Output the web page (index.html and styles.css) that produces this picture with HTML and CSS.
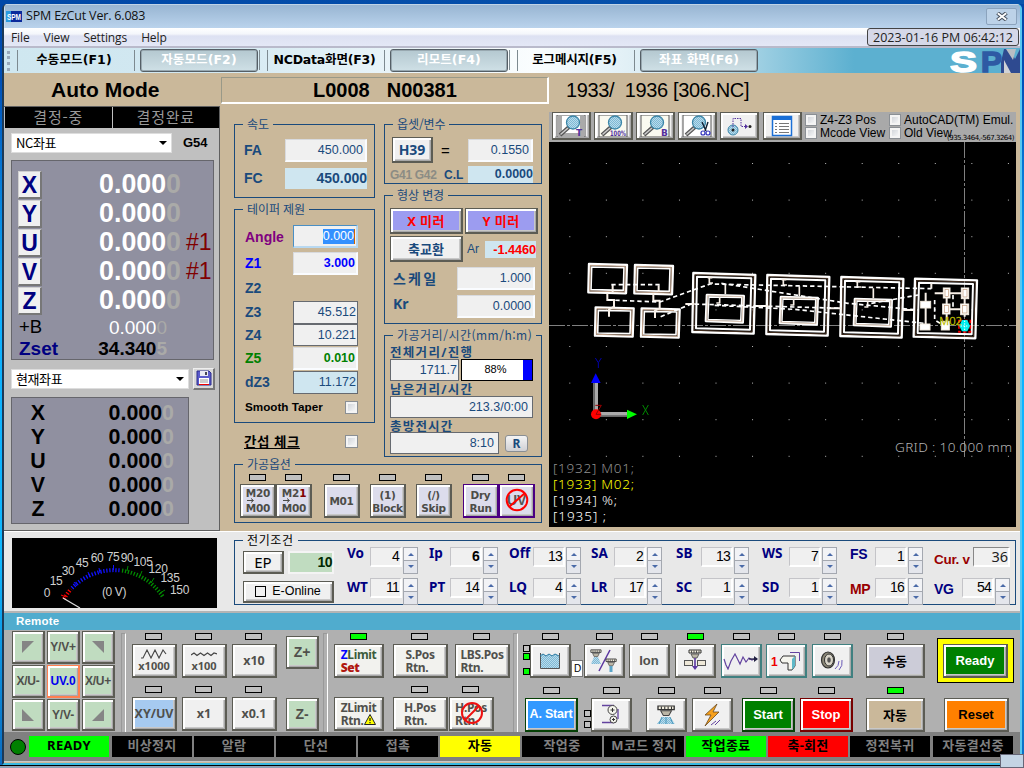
FILE: index.html
```html
<!DOCTYPE html>
<html lang="ko">
<head>
<meta charset="utf-8">
<title>SPM EzCut Ver. 6.083</title>
<link rel="stylesheet" href="styles.css">
</head>
<body>
<svg width="0" height="0" class="defs">
  <defs>
    <pattern id="chk" width="2" height="2" patternUnits="userSpaceOnUse"><rect width="2" height="2" fill="#b8dcec"/><rect width="1" height="1" fill="#7fb8d4"/><rect x="1" y="1" width="1" height="1" fill="#7fb8d4"/></pattern>
    <g id="lens"><path d="M4 21 L13 13" stroke="#555" stroke-width="4"/><path d="M4.500 20.500 L12 14" stroke="#ccc" stroke-width="1.600"/><circle cx="17" cy="8.500" r="6.500" fill="url(#chk)" stroke="#3c86a8" stroke-width="1.300"/></g>
    <g id="nozzle"><path d="M0 0H12V3H0Z" fill="#f4f0e0" stroke="#333"/><path d="M2.500 .5V3M5 .5V3M7.500 .5V3M10 .5V3" stroke="#333" stroke-width=".8"/><path d="M2 4H10L8 8H4Z" fill="#bbb6a6" stroke="#444" stroke-width=".8"/></g>
  </defs>
</svg>
<div class="window">
  <header class="titlebar">
    <svg class="appicon" width="16" height="11" viewBox="0 0 16 11"><rect width="16" height="11" fill="#0a2a9c"/><rect width="5" height="11" fill="#2a9be0"/><text x="1" y="9" textLength="14" lengthAdjust="spacingAndGlyphs" font-size="8.500" font-weight="bold" fill="#fff">SPM</text></svg>
    <span class="title">SPM EzCut Ver. 6.083</span>
    <span class="close"><svg width="12" height="9" viewBox="0 0 12 9"><path d="M1.500 1L10.500 8M10.500 1L1.500 8" stroke="#4b5563" stroke-width="4"/><path d="M1.800 1.200L10.200 7.800M10.200 1.200L1.800 7.800" stroke="#fff" stroke-width="1.800"/></svg></span>
  </header>
  <nav class="menubar"><span>File</span><span>View</span><span>Settings</span><span>Help</span><time>2023-01-16 PM 06:42:12</time></nav>
  <div class="tabs">
    <i class="grip"></i>
    <span class="tab flat first">수동모드(F1)</span><span class="tab down">자동모드(F2)</span><span class="tab flat">NCData화면(F3)</span><span class="tab down">리모트(F4)</span><span class="tab flat">로그메시지(F5)</span><span class="tab down last">좌표 화면(F6)</span>
    <svg class="logo" width="70" height="25" viewBox="0 0 70 25"><text x="0" y="23.500" textLength="27" lengthAdjust="spacingAndGlyphs" fill="#fff" stroke="#fff" stroke-width="1.500">S</text><text x="31" y="23.500" textLength="21" lengthAdjust="spacingAndGlyphs" fill="#2e5aa4" stroke="#2e5aa4" stroke-width="1.500">P</text><path d="M54 1H60L65 11L70 1V25H51V14Z" fill="#2e4a90"/><path d="M56 1H66L63 12Z" fill="#b9bec4"/><path d="M54 12L61 25H54Z" fill="#cfd2d6"/></svg>
  </div>

  <div class="mainhead">
    <h1>Auto Mode</h1>
    <div class="prog"><span>L0008</span><span>N00381</span></div>
    <div class="lines">1933/&nbsp; 1936 [306.NC]</div>
  </div>

  <main class="work">
    <aside class="left">
      <div class="states"><span>결정-중</span><span>결정완료</span></div>
      <div class="pick"><span class="combo short">NC좌표</span><b>G54</b></div>
      <div class="axes big">
        <div class="ax"><kbd>X</kbd><span class="num">0.000<i>0</i></span></div>
        <div class="ax"><kbd>Y</kbd><span class="num">0.000<i>0</i></span></div>
        <div class="ax"><kbd>U</kbd><span class="num">0.000<i>0</i></span><em>#1</em></div>
        <div class="ax"><kbd>V</kbd><span class="num">0.000<i>0</i></span><em>#1</em></div>
        <div class="ax"><kbd>Z</kbd><span class="num">0.000<i>0</i></span></div>
        <div class="aux"><span>+B</span><span class="num">0.000<i>0</i></span></div>
        <div class="aux zset"><span>Zset</span><span class="num">34.340<i>5</i></span></div>
      </div>
      <div class="pick second"><span class="combo long">현재좌표</span>
        <span class="save"><svg width="16" height="16" viewBox="0 0 16 16"><path d="M1 1H13L15 3V15H1Z" fill="#5a5acb" stroke="#2c2c8c"/><rect x="4" y="1" width="8" height="5" fill="#e8e8f4"/><rect x="9" y="2" width="2" height="3" fill="#445"/><rect x="3" y="8" width="10" height="7" fill="#fff"/><path d="M4 10H12M4 12H12" stroke="#999"/><path d="M3 14.500H13" stroke="#e00"/></svg></span></div>
      <div class="axes small">
        <div><b>X</b><span class="num">0.000<i>0</i></span></div>
        <div><b>Y</b><span class="num">0.000<i>0</i></span></div>
        <div><b>U</b><span class="num">0.000<i>0</i></span></div>
        <div><b>V</b><span class="num">0.000<i>0</i></span></div>
        <div><b>Z</b><span class="num">0.000<i>0</i></span></div>
      </div>
    </aside>

    <section class="middle">
      <div class="cols">
        <div class="stack">
          <fieldset class="speed"><legend>속도</legend>
            <div class="row"><label>FA</label><span class="in">450.000</span></div>
            <div class="row fc"><label>FC</label><span class="in ro">450.000</span></div>
          </fieldset>
          <fieldset class="taper"><legend>테이퍼 제원</legend>
            <div class="row r27 purple"><label>Angle</label><span class="in focus"><mark>0.000</mark></span></div>
            <div class="row r26 blue"><label>Z1</label><span class="in">3.000</span></div>
            <div class="row r24"><label>Z2</label></div>
            <div class="row r24"><label>Z3</label><span class="in box">45.512</span></div>
            <div class="row r22"><label>Z4</label><span class="in box">10.221</span></div>
            <div class="row r24 green"><label>Z5</label><span class="in">0.010</span></div>
            <div class="row r24"><label>dZ3</label><span class="in box cyan">11.172</span></div>
            <div class="row r26 smooth"><label>Smooth Taper</label><i class="cb"></i></div>
          </fieldset>
          <div class="interf"><u>간섭 체크</u><i class="cb"></i></div>
        </div>
        <div class="stack">
          <fieldset class="offset"><legend>옵셋/변수</legend>
            <div class="line"><span class="btn h39">H39</span><span class="eq">=</span><span class="in">0.1550</span></div>
            <div class="line two"><span class="dim">G41 G42</span><span class="cl">C.L</span><span class="in ro">0.0000</span></div>
          </fieldset>
          <fieldset class="shape"><legend>형상 변경</legend>
            <div class="line"><span class="btn mirror">X 미러</span><span class="btn mirror">Y 미러</span></div>
            <div class="line swap"><span class="btn">축교환</span><span class="ar">Ar</span><span class="arv">-1.4460</span></div>
            <div class="line wide"><label>스케일</label><span class="in">1.000</span></div>
            <div class="line wide kr"><label>Kr</label><span class="in">0.0000</span></div>
          </fieldset>
          <fieldset class="dist"><legend>가공거리/시간(mm/h:m)</legend>
            <h4>전체거리/진행</h4>
            <div class="line"><span class="in box total">1711.7</span><span class="progress">88%</span></div>
            <h4>남은거리/시간</h4>
            <div class="line"><span class="in box remain">213.3/0:00</span></div>
            <h4>총방전시간</h4>
            <div class="line"><span class="in box spark">8:10</span><span class="rbtn">R</span></div>
          </fieldset>
        </div>
      </div>
      <fieldset class="options"><legend>가공옵션</legend>
        <div class="keys">
          <div class="key"><i class="led"></i><span class="btn tall">M20<svg class="arrow" width="8" height="5" viewBox="0 0 8 5"><path d="M0 2.500H6M4 .5L6.500 2.500L4 4.500" fill="none" stroke="#4c4c48"/></svg>M00</span></div>
          <div class="key"><i class="led"></i><span class="btn tall"><span>M2<q>1</q></span><svg class="arrow" width="8" height="5" viewBox="0 0 8 5"><path d="M0 2.500H6M4 .5L6.500 2.500L4 4.500" fill="none" stroke="#4c4c48"/></svg>M00</span></div>
          <div class="key k3"><i class="led"></i><span class="btn">M01</span></div>
          <div class="key k4"><i class="led"></i><span class="btn">(1)<br>Block</span></div>
          <div class="key k4"><i class="led"></i><span class="btn">(/)<br>Skip</span></div>
          <div class="key k6"><i class="led"></i><span class="btn violet">Dry<br>Run</span></div>
          <div class="key"><i class="led"></i><span class="btn violet"><svg width="28" height="28" viewBox="0 0 28 28"><text x="4" y="18.500" font-size="14" font-weight="bold" fill="#555">UV</text><circle cx="14" cy="14" r="10.300" fill="none" stroke="#f00" stroke-width="2"/><path d="M6 21L22 7" stroke="#f00" stroke-width="2"/></svg></span></div>
        </div>
      </fieldset>
    </section>

    <section class="viewer">
      <div class="vtools">
        <span class="btn"><svg width="30" height="22" viewBox="0 0 30 22"><rect x="1" y="0" width="28" height="22" fill="#fff" stroke="#555"/><path d="M2 1H6V18H24V1H29V21H2Z" fill="#aaa"/><use href="#lens" x="0" y="-1"/><text x="20" y="21" class="tg">T</text></svg></span>
        <span class="btn"><svg width="30" height="22" viewBox="0 0 30 22"><rect x="1" y="0" width="28" height="22" fill="#fafaf0" stroke="#555"/><use href="#lens" y="-1"/><text x="12" y="21" class="tg pct" textLength="16" lengthAdjust="spacingAndGlyphs">100%</text></svg></span>
        <span class="btn"><svg width="30" height="22" viewBox="0 0 30 22"><rect x="1" y="0" width="28" height="22" fill="#fafaf0" stroke="#555"/><use href="#lens" y="-1"/><text x="21" y="21" class="tg">B</text></svg></span>
        <span class="btn"><svg width="30" height="22" viewBox="0 0 30 22"><rect x="1" y="0" width="28" height="22" fill="#fff" stroke="#555"/><use href="#lens" y="-1"/><path d="M20 7L24 16M26 7L23 16" stroke="#123" stroke-width="1.400"/><circle cx="21" cy="18" r="2" fill="none" stroke="#33b" stroke-width="1.200"/><circle cx="26" cy="18" r="2" fill="none" stroke="#33b" stroke-width="1.200"/></svg></span>
        <span class="btn"><svg width="30" height="22" viewBox="0 0 30 22"><circle cx="9" cy="15" r="5" fill="url(#chk)" stroke="#3c86a8"/><circle cx="9" cy="15" r="1.500" fill="#222"/><path d="M9 12V3.500H17V11.500H23" fill="none" stroke="#53309c" stroke-dasharray="1.500 1"/><path d="M21 9L24 11.500L21 14Z" fill="#53309c"/><circle cx="26" cy="11.500" r="1.500" fill="#222"/></svg></span>
        <span class="btn wide"><svg width="30" height="22" viewBox="0 0 30 22"><rect x="5.500" y="1.500" width="19" height="19" fill="#fff" stroke="#1a6fd6" stroke-width="1.500"/><path d="M5 3H25" stroke="#1a6fd6" stroke-width="4"/><path d="M8 8.500H10M8 11.500H10M8 14.500H10M8 17.500H10M12 8.500H22M12 11.500H22M12 14.500H22M12 17.500H22" stroke="#777"/></svg></span>
        <div class="flags"><span><i class="cb"></i>Z4-Z3 Pos</span><span><i class="cb"></i>AutoCAD(TM) Emul.</span><span><i class="cb"></i>Mcode View</span><span><i class="cb"></i>Old View</span><small>(935.3464,-567.3264)</small></div>
      </div>
      <svg class="cad" width="467" height="385" viewBox="549 142 467 385">
        <defs>
          <pattern id="dots" x="569.300" y="163" width="36.550" height="36.600" patternUnits="userSpaceOnUse"><rect width="1" height="1" fill="#bbb"/></pattern>
          <g id="part" stroke-linejoin="round"><path d="M5 2L191 8L186 184L2 179Z" stroke="#fff" stroke-width="7"/><path d="M16 13L179 18L175 172L13 168Z" stroke="#fff" stroke-width="6"/><path d="M10 7L186 12L181 179L7 174Z" stroke="#6a4a34" stroke-width="2"/><path d="M46 68L156 71L153 150L43 146Z" stroke="#fff" stroke-width="8"/><path d="M52 74L150 76L147 144L49 141Z" stroke="#fff" stroke-width="4"/><path d="M48 70L154 73L151 148L45 144Z" stroke="#b08a6c" stroke-width="1.500"/><path d="M53 14V32H64M101 36V66M84 74V92H74M48 16H62" stroke="#f8f0e8" stroke-width="5"/></g>
          <g id="tile" stroke-linejoin="round"><path d="M3 2L117 5L114 90L1 87Z" stroke="#fff" stroke-width="7"/><path d="M11 11L108 13L106 81L9 79Z" stroke="#fff" stroke-width="5"/><path d="M7 6L112 9L110 86L5 83Z" stroke="#c8a890" stroke-width="3"/></g>
        </defs>
        <rect x="549" y="142" width="467" height="385" fill="#000"/>
        <rect x="549" y="142" width="467" height="320" fill="url(#dots)"/>
        <path d="M964.500 142V459M549 325.500H1016" stroke="#808080" stroke-dasharray="16 2 3 2" fill="none"/>
        <g transform="translate(548 240) scale(.33333)" fill="none">
          <use href="#tile" x="120" y="70"/><use href="#tile" x="258" y="73"/><use href="#tile" x="140" y="200"/><use href="#tile" x="278" y="203"/>
          <use href="#part" x="431" y="97"/><use href="#part" x="653" y="103"/><use href="#part" x="875" y="109"/>
          <g stroke-linejoin="round"><path d="M1101 116L1287 121L1282 295L1097 290Z" stroke="#fff" stroke-width="7"/><path d="M1113 128L1275 132L1271 283L1109 279Z" stroke="#fff" stroke-width="6"/><path d="M1106 122L1282 126L1277 290L1102 285Z" stroke="#6a4a34" stroke-width="2"/></g>
          <g stroke="#f8f0e8" stroke-width="6"><path d="M178 160V180H198V200L183 208V230M194 134V158M316 160V182H335V204L321 212V234M332 136V156M412 192H440M620 198H660M842 205H880M1062 210H1098M1133 158V260M1160 160H1250M1196 208H1250M1196 160V258M1250 160V230M1150 130V146"/></g>
          <g stroke="#fff" stroke-width="5" stroke-dasharray="13 9"><path d="M190 134H340M180 180L336 186L486 132L1150 146M338 230L430 192L880 205M520 130L900 190L1110 210M500 196L740 208L1130 250M970 190L1110 165M1215 165V205M1160 180V240L1190 258"/></g>
          <g fill="#fff" stroke="#f4ece0" stroke-width="3"><rect x="1186" y="144" width="20" height="30"/><rect x="1240" y="144" width="22" height="32"/><rect x="1184" y="192" width="22" height="30"/><rect x="1238" y="192" width="24" height="32"/><rect x="1118" y="184" width="30" height="20"/><rect x="1116" y="252" width="30" height="18"/><rect x="1180" y="244" width="24" height="26"/></g>
          <g stroke="#c09878" stroke-width="2"><rect x="1191" y="149" width="10" height="20"/><rect x="1245" y="149" width="12" height="22"/><rect x="1189" y="197" width="12" height="20"/><rect x="1243" y="197" width="14" height="22"/></g>
          <rect x="1233" y="242" width="34" height="34" stroke="#f00" stroke-width="5" stroke-dasharray="10 6"/><path d="M1242 240H1258L1266 258L1258 274H1242L1234 258Z" fill="#0ee"/><path d="M1238 258H1262M1250 242V274" stroke="#fff" stroke-width="3" stroke-dasharray="4 4"/>
          <text x="1174" y="256" class="m02" textLength="68" lengthAdjust="spacingAndGlyphs">M02</text>
          <path d="M143 425V520" stroke="#aaa" stroke-width="14"/><path d="M155 523H238" stroke="#aaa" stroke-width="14"/><path d="M139 425V512M158 528H238" stroke="#666" stroke-width="4"/>
          <path d="M143 400L158 429H129Z" fill="#00f"/><path d="M267 523L237 509V537Z" fill="#0f0"/><circle cx="144" cy="523" r="15" fill="#f00"/>
          <path d="M142 354L151 368L160 354M151 368V384" stroke="#00a" stroke-width="3"/><path d="M284 495L301 525M301 495L284 525" stroke="#080" stroke-width="3"/><path d="M142 496H160L144 523H160" stroke="#900" stroke-width="3"/>
        </g>
        <g class="cadtext"><text x="895" y="452" fill="#b4b4b4" textLength="117">GRID : 10.000 mm</text><text x="553" y="473" fill="#909090" textLength="81">[1932] M01;</text><text x="553" y="489" fill="#ff0" textLength="81">[1933] M02;</text><text x="553" y="505" fill="#fff" textLength="64">[1934] %;</text><text x="553" y="521" fill="#fff" textLength="53">[1935] ;</text></g>
      </svg>
    </section>
  </main>

  <section class="elec">
    <svg class="gauge" width="205" height="70" viewBox="12 538 205 70">
      <rect x="12" y="538" width="205" height="70" fill="#000"/>
      <g fill="none" stroke-width="4" stroke-dasharray="1.300 1.700"><path d="M64 599A59 59 0 0 1 71 589" stroke="#f00"/><path d="M72 588A59 59 0 0 1 121 570.500" stroke="#11f"/><path d="M122 570.600A59 59 0 0 1 163 597" stroke="#080"/></g>
      <path d="M77 586L74 582M90 577L88 572M100 573L99 568M113.500 570V565" stroke="#11f"/><path d="M127 571L128 566M140 576L142 571M151 583L154 578M160 593L165 590" stroke="#080"/><path d="M66 597L61 595" stroke="#f00"/>
      <path d="M63 598L80 608" stroke="#ddd" stroke-width="1.200"/>
      <g class="gt"><text x="47" y="597">0</text><text x="56" y="585">15</text><text x="68" y="575">30</text><text x="82" y="567">45</text><text x="97" y="562">60</text><text x="113" y="561">75</text><text x="127" y="562">90</text><text x="143" y="566">105</text><text x="158" y="573">120</text><text x="170" y="582">135</text><text x="179.500" y="594">150</text><text x="114" y="596">(0 V)</text></g>
    </svg>
    <fieldset class="cond"><legend>전기조건</legend>
      <div class="ep"><span class="btn epb">EP</span><span class="epv">10</span><span class="btn online"><i></i>E-Online</span></div>
      <div class="params">
        <div><label>Vo</label><span class="val">4</span><i class="spin"></i></div>
        <div><label>Ip</label><span class="val"><b>6</b></span><i class="spin"></i></div>
        <div><label>Off</label><span class="val">13</span><i class="spin"></i></div>
        <div><label>SA</label><span class="val">2</span><i class="spin"></i></div>
        <div><label>SB</label><span class="val">13</span><i class="spin"></i></div>
        <div><label>WS</label><span class="val">7</span><i class="spin"></i></div>
        <div><label class="ar2">FS</label><span class="val">1</span><i class="spin"></i></div>
        <div class="cur"><label class="ar2 red">Cur. v</label><span class="val">36</span></div>
        <div><label>WT</label><span class="val">11</span><i class="spin"></i></div>
        <div><label>PT</label><span class="val">14</span><i class="spin"></i></div>
        <div><label>LQ</label><span class="val">4</span><i class="spin"></i></div>
        <div><label>LR</label><span class="val">17</span><i class="spin"></i></div>
        <div><label>SC</label><span class="val">1</span><i class="spin"></i></div>
        <div><label>SD</label><span class="val">1</span><i class="spin"></i></div>
        <div><label class="ar2 red">MP</label><span class="val">16</span><i class="spin"></i></div>
        <div><label class="ar2">VG</label><span class="val">54</span><i class="spin"></i></div>
      </div>
    </fieldset>
  </section>

  <h2 class="remotehead">Remote</h2>
  <section class="remote">
    <div class="dpad">
      <span class="btn"><svg width="12" height="12"><path d="M0 0H12L0 12Z"/></svg></span><span class="btn">Y/V+</span><span class="btn"><svg width="12" height="12"><path d="M0 0H12V12Z"/></svg></span>
      <span class="btn">X/U-</span><span class="btn home">UV.0</span><span class="btn">X/U+</span>
      <span class="btn"><svg width="12" height="12"><path d="M0 0V12H12Z"/></svg></span><span class="btn">Y/V-</span><span class="btn"><svg width="12" height="12"><path d="M12 0V12H0Z"/></svg></span>
    </div>
    <div class="sep s1"></div>
    <div class="bank b1">
      <div class="keys"><div class="key"><i class="led"></i><span class="btn wave"><svg width="26" height="10" viewBox="0 0 26 10"><path d="M0 9H2L6 1L10 9L14 1L18 9L22 1L25 5" fill="none" stroke="#444" stroke-width="1.100"/></svg>x1000</span></div><div class="key"><i class="led"></i><span class="btn wave"><svg width="26" height="10" viewBox="0 0 26 10"><path d="M0 6L3 4L6 6.500L9.500 4L13 6.500L16.500 4L20 6.500L23 4L26 5" fill="none" stroke="#444" stroke-width="1.200"/></svg>x100</span></div><div class="key"><i class="led"></i><span class="btn">x10</span></div></div>
      <div class="keys"><div class="key"><i class="led"></i><span class="btn xy">XY/UV</span></div><div class="key"><i class="led"></i><span class="btn">x1</span></div><div class="key"><i class="led"></i><span class="btn">x0.1</span></div></div>
    </div>
    <div class="zpair"><span class="btn">Z+</span><span class="btn">Z-</span></div>
    <div class="sep s2"></div>
    <div class="bank b2">
      <div class="keys"><div class="key zl"><i class="led on"></i><span class="btn two"><span><em>Z</em><ins>Limit</ins><br><strong>Set</strong></span></span></div><div class="key pos"><i class="led"></i><span class="btn two"><span>S.Pos<br>Rtn.</span></span></div><div class="key lbs"><i class="led"></i><span class="btn two"><span>LBS.Pos<br>Rtn.</span></span></div></div>
      <div class="keys"><div class="key zl"><i class="led none"></i><span class="btn two"><span>ZLimit<br>Rtn.<svg width="12" height="11" viewBox="0 0 12 11"><path d="M6 .5L11.500 10.500H.5Z" fill="#ff0" stroke="#222"/><path d="M6 4V7M6 8V9.300" stroke="#222" stroke-width="1.300"/></svg></span></span></div><div class="key pos"><i class="led"></i><span class="btn two"><span>H.Pos<br>Rtn.</span></span></div><div class="key hp"><i class="led"></i><span class="btn two"><span>H.Pos<br>Rtn.</span><svg class="ban" width="24" height="24" viewBox="0 0 24 24"><circle cx="12" cy="12" r="10" fill="none" stroke="#e11" stroke-width="2"/><path d="M5 19L19 5" stroke="#e11" stroke-width="2"/></svg></span></div></div>
    </div>
    <div class="sep s3"></div>
    <div class="bank b3">
      <div class="keys">
        <div class="lamps"><i></i><i class="on"></i><i class="on gap"></i></div>
        <div class="key w41"><i class="led"></i><span class="btn"><svg width="22" height="18" viewBox="0 0 22 18"><path d="M1 4L4 2L7 4L10 2L13 4L16 2L20 4V16H1Z" fill="url(#chk)"/><path d="M1.500 1V16.500H20.500V1" fill="none" stroke="#555"/><path d="M1 4L4 2L7 4L10 2L13 4L16 2L20 4" fill="none" stroke="#2878a0"/></svg></span></div>
        <span class="dtag">D</span>
        <div class="key w41"><i class="led"></i><span class="btn"><svg width="28" height="24" viewBox="0 0 28 24"><use href="#nozzle" x="1" y="1" transform="scale(.85)"/><path d="M4 8H8L11 15H1Z" fill="url(#chk)"/><path d="M20 1L9 22" stroke="#5a35a0" stroke-width="1.500"/><use href="#nozzle" transform="translate(16 10) scale(.85)"/><path d="M21 17V23" stroke="#5aa5c8" stroke-width="3"/></svg></span></div>
        <div class="key w41 m4"><i class="led"></i><span class="btn ion">Ion</span></div>
        <div class="key w41 m5"><i class="led on"></i><span class="btn"><svg width="24" height="24" viewBox="0 0 24 24"><use href="#nozzle" x="6" y="1"/><rect x="1.500" y="11.500" width="8" height="5" fill="#eee8d8" stroke="#555"/><rect x="14.500" y="11.500" width="8" height="5" fill="#eee8d8" stroke="#555"/><path d="M12 9V19" stroke="#5a35a0" stroke-width="1.600"/><path d="M9 17H15L12 21Z" fill="#5a35a0"/></svg></span></div>
        <div class="key w41 m5"><i class="led"></i><span class="btn teal"><svg width="36" height="18" viewBox="0 0 36 18"><path d="M1 7L3 13L5 17L8 9L12 2L15 8L17 12L20 5L23 10L26 6L29 8L31 7H34" fill="none" stroke="#63439f" stroke-width="1.200"/><path d="M26 7H33" stroke="#202040" stroke-width="1.200"/><path d="M31 4L35 7L31 10Z" fill="#202040"/></svg></span></div>
        <div class="key w41 m4"><i class="led"></i><span class="btn teal"><svg width="30" height="20" viewBox="0 0 30 20"><text x="0" y="15" font-size="12" font-weight="bold" fill="#e00">1</text><path d="M9 9L12 5H24V15L21 19H17V12H11Z" fill="#f5f5ee" stroke="#333"/><path d="M21 8L24 5V15L21 19Z" fill="#5fb8c8"/><path d="M19 1.500H28.500V10" fill="none" stroke="#63439f"/></svg></span></div>
        <div class="key w41 m5"><i class="led"></i><span class="btn teal"><svg width="26" height="20" viewBox="0 0 26 20"><ellipse cx="9" cy="9" rx="6.500" ry="8" fill="#8c8878" stroke="#333" stroke-width="1.200"/><ellipse cx="10" cy="9" rx="4.500" ry="6" fill="#d8d4c8" stroke="#333"/><ellipse cx="10" cy="9" rx="1.800" ry="2.800" fill="#555"/><path d="M16 18Q20 15 20 10M20 19Q24 15 23 9" fill="none" stroke="#6a5ab8"/></svg></span></div>
        <div class="key w59"><i class="led"></i><span class="btn man">수동</span></div>
        <div class="ready"><span class="btn">Ready</span></div>
      </div>
      <div class="keys second">
        <div class="key w53"><i class="led"></i><span class="btn astart">A. Start</span></div>
        <div class="lamps low"><i></i><i></i></div>
        <div class="key w41"><i class="led"></i><span class="btn"><svg width="24" height="22" viewBox="0 0 24 22"><path d="M3 1.500H15M3 18.500H15M19 5V15" stroke="#63439f" stroke-width="1.300"/><circle cx="13.500" cy="6" r="4.500" fill="#f4f4ec" stroke="#444"/><path d="M13.500 4V8M11.500 6H15.500" stroke="#333"/><circle cx="14.500" cy="15.500" r="3.500" fill="#f4f4ec" stroke="#444"/><path d="M14.500 14V17M13 15.500H16" stroke="#333"/></svg></span></div>
        <div class="key w41 m14"><i class="led"></i><span class="btn"><svg width="22" height="20" viewBox="0 0 22 20"><use href="#nozzle" transform="translate(3 1) scale(1.350 1.200)"/><path d="M7 12H15L20 19H2Z" fill="url(#chk)"/><path d="M7 12L4 19M11 12V19M15 12L18 19" stroke="#4a98bc"/></svg></span></div>
        <div class="key w41 m5"><i class="led"></i><span class="btn"><svg width="20" height="24" viewBox="0 0 20 24"><path d="M15 1L3 12H9L3 23L17 9H11Z" fill="#f6a01c" stroke="#6a4a20" stroke-width=".8"/><path d="M9 22L14 18M13 22L18 17" stroke="#63439f"/></svg></span></div>
        <div class="key w53 m9"><i class="led"></i><span class="btn start">Start</span></div>
        <div class="key w53 m5"><i class="led"></i><span class="btn stop">Stop</span></div>
        <div class="key w59"><i class="led on"></i><span class="btn auto">자동</span></div>
        <span class="btn reset">Reset</span>
      </div>
    </div>
  </section>

  <footer class="status"><i class="dot"></i><span class="ok">READY</span><span>비상정지</span><span>알람</span><span>단선</span><span>접촉</span><span class="yel">자동</span><span>작업중</span><span>M코드 정지</span><span class="ok">작업종료</span><span class="bad">축-회전</span><span>정전복귀</span><span>자동결선중</span></footer>
</div>
<div class="taskbar"></div>
<div class="corner"></div>
</body>
</html>
```
FILE: styles.css
```css
* { box-sizing: border-box; }
body { margin: 0; width: 1024px; height: 768px; overflow: hidden; background: linear-gradient(90deg, #0048a8, #0a55ac) 0 0/100% 4px no-repeat, linear-gradient(#0046a6, #0050b8 80px, #0db0ff 300px, #10b8ff 560px, #0a6ac0); font-family: "Liberation Sans", "Noto Sans CJK KR", sans-serif; font-size: 13px; line-height: 1; }
h1, h2, h4 { margin: 0; }
i, em { font-style: normal; }
span { white-space: nowrap; }
.defs { position: absolute; }
.window { margin: 4px 2px 0; height: 761px; border-left: 2px solid #1c3a58; border-right: 2px solid #58c8f0; border-bottom: 2px solid #38b8e0; border-radius: 5px 5px 0 0; overflow: hidden; background: #cab89a; }

.titlebar { height: 24px; display: flex; align-items: center; padding: 0 3px 0 1px; background: linear-gradient(#e8f2fc 0, #98b5d2 1px, #bad3ec); font: 13px/16px "Open Sans", sans-serif; border-left: 1px solid #cde; }
.title { margin-left: 4px; letter-spacing: -0.18px; color: #111; font-size: 12.500px; }
.appicon { font-family: "Liberation Sans"; }
.close { margin-left: auto; width: 31px; height: 17px; border: 1px solid #8ba3bd; border-radius: 2px; display: flex; align-items: center; justify-content: center; background: #bcd2e8; }
.menubar { height: 20px; border-bottom: 2px solid #b9bacb; display: flex; align-items: center; padding-left: 7px; background: linear-gradient(#fff 0, #f4f6fb 6px, #dde1f2 8px, #e4e8f6); font: 12px/16px "Open Sans", sans-serif; color: #222; }
.menubar span { margin-right: 14px; padding-top: 1px; font-size: 12px; letter-spacing: -0.1px; }
.menubar time { margin-left: auto; margin-right: 1px; width: 152px; height: 18px; line-height: 17px; border: 1px solid #444; border-radius: 3px; text-align: center; background: #d5d8e8; font-size: 12.500px; }

.tabs { height: 25px; display: flex; align-items: center; background: linear-gradient(90deg, #cfe7f0 0, #d2e8f1 200px, #fafdfe 530px, #d2e8f1 680px, #5cb0d0 850px, #5cb0d0); }
.grip { width: 4px; height: 20px; margin-left: 3px; border-left: 3px dotted #9ab; }
.tab { height: 21px; line-height: 20px; text-align: center; font-family: "DejaVu Sans", "Noto Sans CJK KR", sans-serif; font-weight: bold; font-size: 12.500px; letter-spacing: 0.1px; }
.tab.flat { width: 118px; margin: 0 5px 0 9px; padding-right: 4px; border-left: 1px solid #7d8a90; border-right: 1px solid #7d8a90; color: #000; }
.tab.flat + .tab.down + .tab.flat { letter-spacing: -0.2px; padding-right: 3px; }
.tab.first { margin-left: 6px; }
.tab.down { width: 118px; height: 23px; border: 1px solid #555f66; border-radius: 3px; color: #fff; background: linear-gradient(#b4c8d0, #cfe0e6); box-shadow: inset 0 0 0 1px #98a8b0; position: relative; }
.tab.down::after { content: ""; position: absolute; right: -3px; top: 0; height: 20px; border-right: 1px solid #7d8a90; }
.tab.last::after { border: 0; }
.logo { margin-left: auto; font: bold 30px "Liberation Sans", sans-serif; }

.mainhead { height: 33px; display: flex; font-size: 20px; }
.mainhead h1 { width: 216px; padding: 6px 0 0 47px; font-size: 21px; line-height: 22px; }
.prog { width: 328px; height: 27px; margin: 4px 0 0 1px; border: 1px solid #998; border-right: 2px solid #fff; border-bottom: 2px solid #fff; font-weight: bold; line-height: 25px; padding-left: 91px; }
.prog span + span { margin-left: 17px; }
.lines { padding-left: 17px; line-height: 34px; letter-spacing: -0.35px; }

.work { display: flex; height: 425px; }
.left { width: 216px; background: #c0c0c0; border: 1px solid #606060; border-left: 0; }
.states { display: flex; gap: 1px; height: 21px; background: #c0c0c0; padding-left: 1px; }
.states span { flex: 1; background: #000; color: #999; text-align: center; font: 15px/20px "Noto Sans CJK KR"; letter-spacing: 0.8px; }
.pick { display: flex; margin: 4px 0 0 7px; height: 21px; align-items: center; }
.pick b { margin-left: 11px; font-size: 13px; }
.combo { height: 20px; background: #fff; padding-left: 4px; font: 13px/18px "Noto Sans CJK KR"; letter-spacing: -0.4px; display: flex; align-items: center; justify-content: space-between; border: 1px solid #ddd; }
.combo::after { content: ""; border: 4px solid transparent; border-top-color: #000; border-bottom: 0; margin-right: 4px; }
.short { width: 161px; }
.long { width: 178px; }
.axes { background: #9090a0; border: 1px solid #66666c; margin-left: 7px; color: #000; }
.num { margin-left: auto; }
.num i { color: #aaaaa8; }
.big { width: 203px; height: 200px; margin-top: 7px; padding-top: 9px; }
.ax { display: flex; align-items: center; height: 29px; padding: 0 32px 0 6px; font: bold 26.800px/29px "Liberation Sans"; color: #fff; position: relative; }
kbd { width: 24px; height: 28px; font: bold 23px/26px "Liberation Sans"; color: #000080; background: #f0f0f0; text-align: center; border: 1px solid #d0d0d0; border-right: 2px solid #777; border-bottom: 2px solid #777; }
.ax em { position: absolute; left: 174px; top: 0; font-size: 23px; font-weight: normal; color: #800000; }
.aux { display: flex; align-items: center; height: 21px; padding: 0 46px 0 7px; font-size: 18.500px; }
.aux .num { color: #fff; font-size: 19px; }
.zset { font-weight: bold; color: #000080; font-size: 19px; }
.zset .num { color: #000; }
.big .ax:nth-child(5) { margin-bottom: 2px; }
.pick.second { margin-top: 8px; }
.save { margin-left: 4px; width: 22px; height: 22px; border: 1px solid #eee; border-right: 2px solid #777; border-bottom: 2px solid #777; display: grid; place-items: center; background: #d8d8d8; }
.small { width: 178px; height: 127px; margin-top: 8px; padding-top: 3px; }
.small div { display: flex; height: 24px; padding: 0 14px 0 0; font: bold 21.400px/24px "Liberation Sans"; }
.small b { width: 52px; text-align: center; }

.middle { width: 329px; padding: 11px 0 0 14px; color: #1a4a7c; }
.cols { display: flex; gap: 9px; height: 340px; }
.stack { width: 141px; display: flex; flex-direction: column; gap: 4px; }
.stack + .stack { width: 158px; }
fieldset { margin: 0; min-width: 0; border: 1px solid #1a4a7c; padding: 0 0 0 9px; }
legend { font: 12px/14px "Noto Sans CJK KR", sans-serif; height: 14px; padding: 0 4px; margin-left: -1px; letter-spacing: -0.1px; }
.speed { height: 81px; padding-top: 7px; flex: none; }
.row { display: flex; align-items: center; font-weight: bold; font-size: 14px; }
.row .in { margin-left: auto; margin-right: 16px; width: 65px; }
.speed .row { height: 24px; font-size: 14px; }
.speed .in { width: 82px; margin-right: 7px; padding-right: 2px; }
.speed .fc { margin-top: 5px; height: 22px; }
.in { display: block; height: 23px; line-height: 20px; background: #f0f0f0; border: 1px solid #c8d4e0; border-width: 1px 2px 2px 1px; border-color: #d8dade #fafcff #fafcff #d8dade; text-align: right; padding-right: 1px; font-size: 12.500px; font-weight: normal; color: #1a4a7c; flex: none; }
.in.ro { background: #cfe6f0; border: 0; font-weight: bold; padding-right: 0; line-height: 20px; height: 21px; }
.speed .in.ro { font-size: 14px; padding-right: 0; }
.in.box { border: 1px solid #666a70; }
.in.cyan { background: #cfe6f0; }
.in.focus { border-color: #4a8fc4 #b8d8f0 #b8d8f0 #4a8fc4; }
mark { background: #3390ff; color: #fff; display: inline-block; height: 15px; line-height: 15px; border-right: 1px solid #c60; }
.taper { height: 221px; padding-top: 7px; flex: none; }
.taper label { padding-left: 1px; }
.r26 { height: 26px; } .r24 { height: 24px; } .r22 { height: 22px; } .r27 { height: 27px; }
.r22 .in { height: 22px; }
.purple { color: #800080; }
.blue, .blue .in { color: #00f; font-weight: bold; }
.green, .green .in { color: #008000; font-weight: bold; }
.smooth { color: #000; font-size: 11.700px; }
.cb { display: block; width: 13px; height: 13px; border: 1px solid #8a8f94; background: linear-gradient(135deg, #c8ccd2, #fff); box-shadow: inset 0 0 0 2px #f4f4f4; flex: none; }
.smooth .cb { margin-left: auto; margin-right: 16px; }
.interf { display: flex; justify-content: space-between; align-items: center; padding: 5px 17px 0 10px; color: #000; font: bold 13.500px/18px "Noto Sans CJK KR"; letter-spacing: 0.5px; }

.btn { display: flex; align-items: center; justify-content: center; background: #f0f0f0; border: 2px solid #5c5c54; border-width: 1px 2px 2px 1px; box-shadow: inset 2px 2px 0 #fff, inset -1px -1px 0 #a8a8a8, inset 0 0 0 2px #c8c8c8; text-align: center; flex: none; }
.line { display: flex; align-items: center; margin-left: -4px; }
.offset { height: 68px; padding-top: 7px; }
.offset .line { height: 24px; margin-left: -2px; }
.h39 { width: 41px; height: 26px; font: bold 14px "Noto Sans", sans-serif; }
.eq { width: 35px; padding-left: 8px; color: #000; font-size: 15px; }
.offset .in { width: 65px; padding-right: 2px; }
.offset .two { height: 17px; margin-top: 4px; font-size: 12px; font-weight: bold; }
.two .in.ro { height: 17px; line-height: 16px; padding-right: 0; }
.two .dim { color: #8c8c84; width: 54px; margin-left: -2px; letter-spacing: -0.3px; }
.two .cl { width: 24px; }
.shape { height: 137px; padding-top: 6px; }
.shape .line { height: 26px; }
.shape .btn { width: 73px; height: 26px; font: bold 13px/20px "Noto Sans", "Noto Sans CJK KR"; }
.shape .mirror { background: #9c9cf0; color: #f00; letter-spacing: 0.4px; }
.mirror + .mirror { margin-left: 2px; }
.shape .swap { margin-top: 2px; }
.ar { font-size: 12px; width: 22px; padding-left: 4px; }
.arv { width: 51px; height: 17px; line-height: 17px; background: #cfe6f0; color: #f00; font-weight: bold; font-size: 12.800px; text-align: right; letter-spacing: -0.1px; }
.shape .wide { margin-top: 4px; height: 24px; font: bold 14px "Noto Sans", "Noto Sans CJK KR"; }
.wide label { width: 67px; padding-left: 3px; letter-spacing: 2.200px; }
.wide .in { width: 78px; font-family: "Liberation Sans"; padding-right: 2px; font-size: 12.500px; letter-spacing: 0; }
.kr label { letter-spacing: 0; margin-top: -6px; }
.dist { height: 130px; padding-top: 2px; }
.dist legend { letter-spacing: 0.5px; }
.dist h4 { font: bold 12.500px/17px "Noto Sans", "Noto Sans CJK KR"; height: 15px; margin-left: -4px; letter-spacing: 1.300px; }
.dist .line { height: 22px; }
.dist h4:nth-of-type(3) { height: 14px; letter-spacing: 1.200px; }
.total { width: 69px; height: 22px; }
.progress { width: 72px; height: 22px; margin-left: 2px; border: 1px solid #000; color: #000; text-align: center; font-size: 11px; line-height: 19px; padding-right: 3px; background: linear-gradient(90deg, #fff 61px, #00f 61px); }
.remain { width: 143px; height: 22px; padding-right: 4px; }
.spark { width: 109px; height: 22px; padding-right: 4px; }
.rbtn { width: 23px; height: 17px; margin-left: 6px; border: 1px solid #8a8f94; border-radius: 3px; background: linear-gradient(#f4f4f4, #d0d0d4); text-align: center; font: bold 12px/15px "Noto Sans"; }
.options { width: 308px; height: 66px; padding: 3px 0 0 5px; }
.options legend { margin-left: 3px; }
.keys { display: flex; }
.key { display: flex; flex-direction: column; align-items: center; gap: 3px; flex: none; }
.led { display: block; width: 17px; height: 7px; border: 1px solid #000; background: #c0c0c0; flex: none; }
.led.on { background: #0f0; }
.led.none { visibility: hidden; }
.options .btn { width: 36px; height: 34px; display: block; padding-top: 4px; font: bold 10.500px/13px "DejaVu Sans"; letter-spacing: -0.3px; color: #4c4c48; background: #dcdcec; }
.options .tall { display: flex; flex-direction: column; align-items: center; justify-content: center; padding: 0 0 0 1px; line-height: 10px; letter-spacing: -0.2px; }
.options .tall svg { margin: 0 auto 0 5px; display: block; }
.options q { quotes: none; color: #800000; }
.options .k3 .btn { padding-top: 10px; }
.options .violet { border-color: #4b0082; }
.options .violet svg { margin: -3px 0 0 1px; font-family: "Liberation Sans"; letter-spacing: 0; }
.k3 { margin-left: 12px; } .k4 { margin-left: 10px; } .k6 { margin-left: 11px; }
.options .led { margin-left: -1px; }

.viewer { width: 468px; padding-top: 6px; }
.vtools { height: 30px; background: #a9a9a9; display: flex; gap: 3px; padding-left: 3px; width: 467px; }
.vtools .btn { width: 39px; height: 28px; }
.vtools .btn.wide { margin-left: 1px; }
.tg { font: bold 9px "DejaVu Sans"; fill: #53309c; }
.tg.pct { font-size: 7.500px; }
.flags { display: grid; grid-template-columns: 84px 127px; grid-template-rows: 13px 13px; padding-top: 1px; font-size: 12px; color: #000; position: relative; }
.flags span { display: flex; align-items: center; gap: 3px; }
.flags .cb { width: 12px; height: 12px; }
.flags small { position: absolute; right: 2px; bottom: 0; font: 7px "DejaVu Sans"; letter-spacing: -0.500px; }
.cad { display: block; }
.cad text { font-family: "Noto Sans"; font-weight: 300; }
.cadtext { font-size: 13.500px; }
.m02 { font-size: 33px; fill: #e0e000; stroke: #b0b000; stroke-width: 1px; }

.elec { height: 82px; background: #e8e8e8; border-top: 1px solid #fff; border-bottom: 2px solid #b4b4b4; display: flex; padding-left: 8px; }
.gauge { margin-top: 6px; }
.gt { font: 12px "Liberation Sans"; fill: #d0d0d0; text-anchor: middle; letter-spacing: -0.4px; }
.cond { margin: 1px 0 0 17px; width: 782px; height: 72px; padding: 0 0 0 8px; display: block; }
.cond legend { color: #000; margin-left: 0; letter-spacing: 0.6px; }
.ep { float: left; width: 91px; display: grid; grid-template-columns: 41px 46px; gap: 7px 4px; padding-top: 4px; }
.epb { height: 23px; font: 15px "Noto Sans"; color: #000; }
.epv { height: 23px; background: #c0dcc0; border: 2px solid #f4f4f4; text-align: right; font: bold 14px/19px "Liberation Sans"; color: #002800; letter-spacing: -0.5px; }
.online { grid-column: 1 / 3; height: 22px; width: 91px; font-size: 12.500px; color: #000; gap: 6px; }
.online i { width: 11px; height: 11px; border: 1px solid #000; }
.params { margin-left: 104px; display: grid; grid-template-columns: 82px 80px 82px 85px 86px 88px 84px 76px; grid-template-rows: 27px 27px; row-gap: 4px; }
.params div { display: flex; padding-right: 11px; align-items: flex-start; }
.params div:nth-child(8n+3) { padding-right: 10px; }
.params div:nth-child(8n+4) { padding-right: 14px; }
.params div:nth-child(8n+5), .params div:nth-child(8n+6) { padding-right: 13px; }
.params div:nth-child(8n) { padding-right: 0; }
.params label { font: bold 13.500px/12px "Noto Sans"; color: #000080; flex: 1; width: 0; white-space: nowrap; }
.params div:nth-child(n+9) label { padding-top: 3px; }
.params .ar2 { font: bold 14px/15px "Liberation Sans"; letter-spacing: -0.3px; }
.params div:nth-child(n+15) .ar2 { padding-top: 4px; }
.params .red { color: #900; }
.params div.cur .red { font-size: 13.500px; padding-top: 5px; }
.val { width: 32px; height: 20px; background: #f0f0f0; border: 1px solid #c4c4c8; border-right: 2px solid #fff; border-bottom: 2px solid #fff; text-align: right; font: 14px/16px "Liberation Sans"; letter-spacing: -0.8px; color: #000; padding-right: 1px; margin-right: 1px; }
.cur .val { width: 37px; margin: 0; border-color: #888 #fff #fff #888; font: 14.500px/16px "Noto Sans"; letter-spacing: 0; padding: 0; color: #222; }
.spin { width: 15px; height: 27px; border: 1px solid #a4a8b0; background: linear-gradient(#f2f3f6 12px, #a4a8b0 12px, #a4a8b0 13px, #e4e6ec 13px); display: flex; flex-direction: column; justify-content: space-between; align-items: center; padding: 5px 0; }
.spin::before, .spin::after { content: ""; border: 3px solid transparent; border-bottom: 3px solid #4a6aa8; border-top: 0; }
.spin::after { border-top: 3px solid #4a6aa8; border-bottom: 0; }

.remotehead { height: 17px; background: #50acce; color: #fff; font: bold 11.500px/16px "Liberation Sans"; padding-left: 12px; letter-spacing: 0.2px; }
.remote { height: 102px; background: #b0b0b0; display: flex; padding-left: 8px; font-weight: bold; color: #50504c; }
.dpad { display: grid; grid-template-columns: repeat(3, 33px); grid-template-rows: 33px 33px 32px; gap: 1px 2px; padding-top: 1px; }
.dpad .btn, .zpair .btn { background: #c0dcc0; font-size: 12px; }
.dpad .btn { letter-spacing: -0.2px; }
.dpad path { fill: #858585; }
.dpad .home { color: #00e; border-color: #ff7f50; }
.sep { width: 5px; height: 99px; margin-top: 3px; border-top: 1px solid #999; border-left: 1px solid #999; border-right: 1px solid #fff; }
.s1 { margin-left: 6px; }
.s2 { margin-left: 4px; }
.s3 { margin-left: 3px; }
.bank { padding-top: 3px; }
.bank .keys + .keys { margin-top: 8px; }
.bank .key { gap: 4px; }
.bank .btn { height: 34px; width: 100%; }
.b1 { margin-left: 6px; }
.b1 .led { margin-left: -2px; }
.b1 .keys { gap: 5px; }
.b1 .key { width: 45px; }
.b1 .btn { font: bold 12.500px/12px "Noto Sans"; }
.b1 .btn.wave { flex-direction: column; gap: 1px; font-size: 11px; }
.b1 .btn.xy { background: #a6caf0; }
.zpair { margin-left: 9px; padding-top: 6px; display: flex; flex-direction: column; gap: 29px; }
.zpair .btn { width: 33px; height: 33px; font-size: 14px; }
.b2 { margin-left: 6px; }
.zl { width: 50px; } .pos { width: 55px; margin-left: 9px; } .lbs { width: 55px; margin-left: 7px; }
.hp { width: 45px; margin-left: 1px; }
.b2 .led { margin-left: -2px; }
.b2 .btn { font: bold 12px/13px "Noto Sans"; text-align: left; position: relative; letter-spacing: -0.35px; background: #f2f2ee; }
.b2 em { color: #00f; } .b2 ins { color: #3c5c3c; text-decoration: none; } .b2 strong { color: #b01810; }
.ban { position: absolute; left: 10px; top: 3px; }
.b3 { margin-left: 5px; }
.b3 .btn { font-size: 13px; }
.lamps { width: 7px; padding-top: 12px; }
.lamps i { display: block; width: 7px; height: 7px; border: 1px solid #000; margin-bottom: 1px; background: #c0c0c0; }
.lamps .on { background: #0f0; }
.lamps .gap { margin-top: 8px; }
.lamps.low { margin-left: 6px; padding-top: 23px; }
.lamps.low i { margin-bottom: 4px; }
.w41 { width: 41px; } .w53 { width: 53px; } .w59 { width: 59px; margin-left: 13px; }
.dtag { width: 12px; height: 17px; margin: 27px 1px 0 0; background: #fff; border: 1px solid #777; color: #000; font: 10px/16px "Liberation Sans"; padding-left: 2px; }
.m4 { margin-left: 4px; } .m5 { margin-left: 5px; } .m9 { margin-left: 9px; } .m14 { margin-left: 14px; }
.teal { border-color: #408080; }
.b3 .man, .b3 .auto { background: #ccccd8; color: #000; font: bold 13px "Noto Sans CJK KR"; }
.b3 .auto { background: #cab89a; }
.ready { width: 77px; height: 45px; margin: 5px 0 -4px 12px; background: #ff0; border: 1px solid #000; padding: 5px; }
.ready .btn { background: #008000; color: #fff; }
.bank.b3 .keys.second { padding-left: 2px; margin-top: 8px; }
.astart { color: #fff; border-color: #064006; letter-spacing: -0.2px; }
.b3 .btn.astart { font-size: 12.500px; background: #3399ff; }
.start { background: #008000; color: #fff; border-color: #064006; }
.stop { background: #f00; color: #fff; border-color: #700; }
.bank .btn.reset { width: 65px; margin: 11px 0 0 19px; background: #ff8000; color: #000; }

.status { height: 30px; background: #808080; display: flex; align-items: center; gap: 2px; padding-left: 6px; border-bottom: 1px solid #c8c8c8; }
.status span { width: 80px; height: 21px; background: #000; color: #808080; text-align: center; font: bold 13px/19px "Noto Sans", "Noto Sans CJK KR"; letter-spacing: 0.3px; flex: none; }
.status span:nth-child(3), .status span:last-child { margin-left: 1px; }
.dot { width: 16px; height: 16px; border-radius: 50%; background: #008000; border: 1px solid #000; margin-right: 1px; }
.status .ok { background: #0f0; color: #000; }
.status .yel { background: #ff0; color: #000; }
.status .bad { background: #f00; color: #000; }
.taskbar { height: 3px; background: #8ea0b4; border-top: 1px solid #000; }
.corner { position: absolute; right: 0; bottom: 0; width: 24px; height: 14px; background: #c4d4e4; border: 1px solid #667; }
```
